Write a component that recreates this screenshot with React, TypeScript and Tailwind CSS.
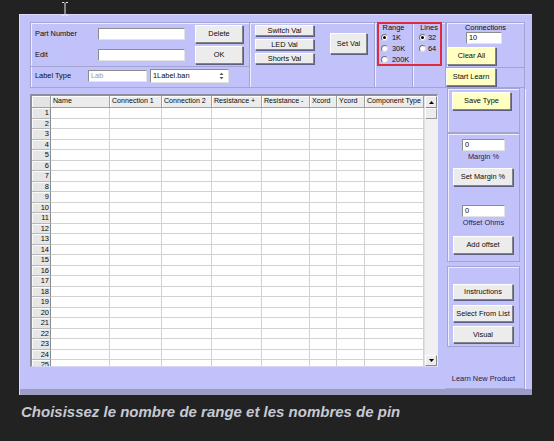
import React from "react";

type BtnProps = { className?: string; yellow?: boolean; children?: React.ReactNode };

function Btn({ className = "", yellow, children }: BtnProps) {
  return (
    <div
      className={`${yellow ? "bg-[#ffffc2]" : "bg-[#ececec]"} border border-[#848484] border-t-[#ffffff] border-l-[#ffffff] shadow-[1px_1px_0_#5e5e80] flex items-center justify-center text-[7.4px] leading-none text-[#0a0a0a] whitespace-nowrap shrink-0 ${className}`}
    >
      {children}
    </div>
  );
}

function Input({ className = "", children, gray }: { className?: string; children?: React.ReactNode; gray?: boolean }) {
  return (
    <div
      className={`bg-white border border-[#8c8c8c] border-r-[#e4e4e4] border-b-[#e4e4e4] flex items-center pl-[2px] text-[7.4px] leading-none shrink-0 ${gray ? "text-[#9a9a9a]" : "text-[#0a0a0a]"} ${className}`}
    >
      {children}
    </div>
  );
}

function Radio({ on, label, gapClass }: { on?: boolean; label: string; gapClass: string }) {
  return (
    <div className="flex items-center h-[11px]">
      <span className="w-[7px] h-[7px] rounded-full bg-white border border-[#707070] border-r-[#d8d8d8] border-b-[#d8d8d8] flex items-center justify-center shrink-0">
        {on && <span className="w-[3px] h-[3px] rounded-full bg-black" />}
      </span>
      <span className={`text-[7.4px] leading-none ${gapClass}`}>{label}</span>
    </div>
  );
}

const cols = ["Name", "Connection 1", "Connection 2", "Resistance +", "Resistance -", "Xcord", "Ycord", "Component Type"];
const rows = Array.from({ length: 25 }, (_, i) => i + 1);

function Grid() {
  return (
    <div className="mt-[6px] w-[408px] h-[273px] border-l-2 border-t-2 border-r border-b border-[#8e8e9e] border-r-[#ececff] border-b-[#d8d8f4] flex bg-white">
      <div className="w-[392px] h-[270px] overflow-hidden">
        <div className="grid grid-cols-[19px_59px_52px_50px_50px_48px_27px_28px_59px] h-[12px]">
          <div className="bg-[#e4e4e4] border-r border-b border-[#a0a0a0] shadow-[inset_1px_1px_0_#ffffff]" />
          {cols.map((c) => (
            <div
              key={c}
              className="bg-[#ececec] border-r border-b border-[#a0a0a0] shadow-[inset_1px_1px_0_#ffffff] text-[7.1px] leading-none pl-[2px] flex items-center whitespace-nowrap overflow-hidden text-[#0a0a0a]"
            >
              {c}
            </div>
          ))}
        </div>
        {rows.map((n) => (
          <div key={n} className="grid grid-cols-[19px_59px_52px_50px_50px_48px_27px_28px_59px] h-[10.5px]">
            <div className="bg-[#e6e6e6] border-r border-b border-r-[#8c8c8c] border-b-[#b8b8b8] shadow-[inset_1px_1px_0_#fafafa] text-[7.5px] leading-none flex items-center justify-end pr-[1px] text-[#0a0a0a]">
              {n}
            </div>
            {cols.map((c) => (
              <div key={c} className="border-r border-b border-[#d2d2d2]" />
            ))}
          </div>
        ))}
      </div>
      <div className="w-[13px] h-[270px] flex flex-col bg-[#f0f0f0] border-l border-[#e0e0e0]">
        <div className="h-[12px] bg-[#ececec] border border-[#8a8a8a] border-t-white border-l-white flex items-center justify-center">
          <svg width="5" height="3" viewBox="0 0 5 3">
            <path d="M0 3L2.5 0L5 3Z" fill="#000" />
          </svg>
        </div>
        <div className="h-[11px] bg-[#ececec] border border-[#9a9a9a] border-t-white border-l-white" />
        <div className="flex-1" />
        <div className="h-[11px] bg-[#ececec] border border-[#8a8a8a] border-t-white border-l-white flex items-center justify-center">
          <svg width="5" height="3" viewBox="0 0 5 3">
            <path d="M0 0L2.5 3L5 0Z" fill="#000" />
          </svg>
        </div>
      </div>
    </div>
  );
}

function LeftCol() {
  return (
    <div className="w-[416px] flex flex-col">
      <div className="relative flex h-[66px]">
        {/* Group A */}
        <div className="w-[220px] flex flex-col">
          <div className="h-[45px] border border-[#a4a4d4] shadow-[inset_1px_1px_0_#eeeeff] flex flex-col pt-[2px] gap-[3px]">
            <div className="flex items-center h-[18px]">
              <span className="w-[67px] pl-[4px] text-[7.4px] leading-none">Part Number</span>
              <Input className="w-[87px] h-[12px]" />
              <Btn className="ml-[10px] w-[48px] h-[18px]">Delete</Btn>
            </div>
            <div className="flex items-center h-[18px]">
              <span className="w-[67px] pl-[4px] text-[7.4px] leading-none">Edit</span>
              <Input className="w-[87px] h-[12px]" />
              <Btn className="ml-[10px] w-[48px] h-[18px]">OK</Btn>
            </div>
          </div>
          <div className="h-[21px] border border-t-0 border-[#a4a4d4] shadow-[inset_1px_0_0_#eeeeff] flex items-center pb-[2px]">
            <span className="w-[57px] pl-[4px] text-[7.4px] leading-none">Label Type</span>
            <Input gray className="w-[59px] h-[12px]">
              Lab
            </Input>
            <div className="ml-[3px] w-[79px] h-[14px] bg-white border border-[#8c8c8c] border-r-[#e4e4e4] border-b-[#e4e4e4] flex items-center justify-between pl-[2px] pr-[4px] text-[7.4px] leading-none">
              <span>1Label.ban</span>
              <svg width="5" height="8" viewBox="0 0 5 8">
                <path d="M0.5 3L2.5 0.8L4.5 3Z" fill="#555" />
                <path d="M0.5 5L2.5 7.2L4.5 5Z" fill="#555" />
              </svg>
            </div>
          </div>
        </div>
        {/* Group B */}
        <div className="w-[125px] h-[66px] border border-l-0 border-[#a4a4d4] shadow-[inset_1px_1px_0_#eeeeff] flex items-start pl-[5px] pt-[2px]">
          <div className="flex flex-col gap-[3px]">
            <Btn className="w-[59px] h-[11px]">Switch Val</Btn>
            <Btn className="w-[59px] h-[11px]">LED Val</Btn>
            <Btn className="w-[59px] h-[11px]">Shorts Val</Btn>
          </div>
          <Btn className="ml-[16px] mt-[8px] w-[37px] h-[21px]">Set Val</Btn>
        </div>
        {/* Range */}
        <div className="w-[38px] h-[66px] border border-l-0 border-[#a4a4d4] shadow-[inset_1px_1px_0_#eeeeff] flex flex-col">
          <div className="text-center text-[7.4px] leading-[9px]">Range</div>
          <div className="pl-[6px] flex flex-col">
            <Radio on label="1K" gapClass="ml-[4px]" />
            <Radio label="30K" gapClass="ml-[4px]" />
            <Radio label="200K" gapClass="ml-[4px]" />
          </div>
        </div>
        {/* Lines */}
        <div className="w-[33px] h-[66px] border border-l-0 border-[#a4a4d4] shadow-[inset_1px_1px_0_#eeeeff] flex flex-col">
          <div className="text-center text-[7.4px] leading-[9px]">Lines</div>
          <div className="pl-[6px] flex flex-col">
            <Radio on label="32" gapClass="ml-[2px]" />
            <Radio label="64" gapClass="ml-[2px]" />
          </div>
        </div>
        <div className="absolute left-[347px] top-0 w-[65px] h-[44px] border-2 border-[#e02a3e]" />
      </div>
      <Grid />
    </div>
  );
}

function RightCol() {
  return (
    <div className="w-[79px] flex flex-col">
      <div className="h-[66px] border border-[#a4a4d4] shadow-[inset_1px_1px_0_#eeeeff] flex flex-col">
        <div className="h-[45px] border-b border-[#a4a4d4] flex flex-col shrink-0">
          <div className="text-center text-[7.4px] leading-[9px]">Connections</div>
          <Input className="ml-[19px] w-[36px] h-[12px]">10</Input>
          <Btn yellow className="mt-[3px] w-[49px] h-[18px]">
            Clear All
          </Btn>
        </div>
        <Btn yellow className="-ml-px w-[50px] h-[18px]">
          Start Learn
        </Btn>
      </div>
      <div className="h-[301px] border-r border-b border-[#a4a4d4] shadow-[1px_1px_0_#eeeeff] flex flex-col">
        <div className="ml-px w-[73px] h-[45px] border border-[#a4a4d4] shadow-[inset_1px_1px_0_#eeeeff] shrink-0">
          <Btn yellow className="ml-[4px] mt-[3px] w-[59px] h-[18px]">
            Save Type
          </Btn>
        </div>
        <div className="ml-px w-[73px] h-[129px] border border-[#a4a4d4] shadow-[inset_1px_1px_0_#eeeeff] flex flex-col shrink-0">
          <Input className="mt-[5px] ml-[14px] w-[43px] h-[12px]">0</Input>
          <div className="mt-[1px] text-center text-[7.4px] leading-[9px] text-[#222255]">Margin %</div>
          <Btn className="mt-[7px] ml-[5px] w-[60px] h-[18px]">Set Margin %</Btn>
          <Input className="mt-[19px] ml-[14px] w-[43px] h-[12px]">0</Input>
          <div className="mt-[1px] text-center text-[7.4px] leading-[9px] text-[#222255]">Offset Ohms</div>
          <Btn className="mt-[9px] ml-[5px] w-[60px] h-[18px]">Add offset</Btn>
        </div>
        <div className="mt-[4px] ml-px w-[73px] h-[81px] border border-[#a4a4d4] shadow-[inset_1px_1px_0_#eeeeff] flex flex-col shrink-0">
          <Btn className="mt-[17px] ml-[5px] w-[60px] h-[16px]">Instructions</Btn>
          <Btn className="mt-[5px] ml-[5px] w-[60px] h-[17px]">Select From List</Btn>
          <Btn className="mt-[4px] ml-[5px] w-[60px] h-[17px]">Visual</Btn>
        </div>
        <div className="mt-[27px] ml-px w-[73px] text-center text-[7.4px] leading-[9px] text-[#1c1c44] whitespace-nowrap">
          Learn New Product
        </div>
      </div>
    </div>
  );
}

export default function App() {
  return (
    <div className="relative w-[554px] h-[441px] bg-[#222222] overflow-hidden font-['Liberation_Sans',Arial,sans-serif] text-[#0a0a0a]">
      <div className="pt-[14px] pl-[19px]">
        <div className="w-[513px] h-[381px] bg-[#c2c2fa] border-t border-l border-[#dadaff] flex flex-col">
          <div className="h-[374px] pl-[10px] pt-[7px] flex">
            <LeftCol />
            <RightCol />
          </div>
          <div className="h-[6px] bg-[#9c9cc4]" />
        </div>
      </div>
      <p className="mt-[8px] ml-[21px] text-[15px] font-bold italic text-[#c6c9d3] leading-[18px] whitespace-nowrap">
        Choisissez le nombre de range et les nombres de pin
      </p>
      <svg className="absolute left-[61px] top-[1px]" width="8" height="16" viewBox="0 0 8 16">
        <path d="M1 1.5h2l1 1l1-1h2M4 2.5v11M1 14.5h2l1-1l1 1h2" stroke="#e6e6e6" strokeWidth="1" fill="none" />
      </svg>
    </div>
  );
}
